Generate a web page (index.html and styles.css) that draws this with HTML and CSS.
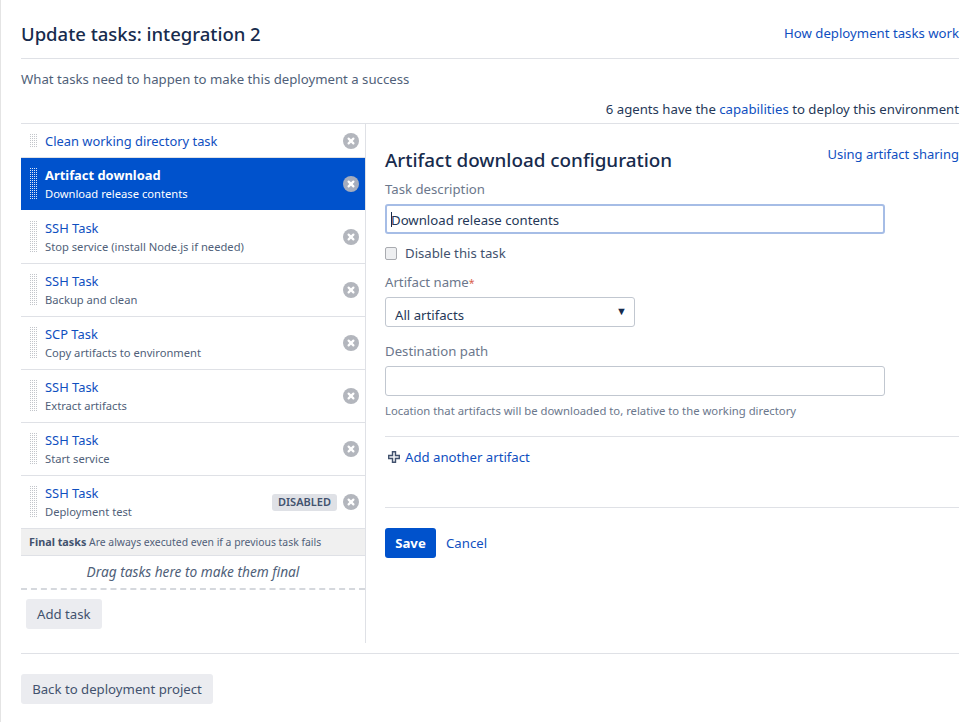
FILE: index.html
```html
<!DOCTYPE html>
<html lang="en">
<head>
    <meta charset="UTF-8">
    <title>Update tasks: integration 2</title>
    <link rel="stylesheet" href="styles.css">
</head>
<body>
    <svg class="sprites" width="0" height="0">
        <symbol id="remove" viewBox="0 0 16 16">
            <circle cx="8" cy="8" r="8" stroke="none"/>
            <path d="M5.6 5.6l4.8 4.8M10.4 5.6l-4.8 4.8"/>
        </symbol>
    </svg>

    <div class="page">
        <header class="page-head">
            <h1>Update tasks: integration 2</h1>
            <a href="#">How deployment tasks work</a>
        </header>
        <p class="page-desc">What tasks need to happen to make this deployment a success</p>
        <p class="agents">6 agents have the <a href="#">capabilities</a> to deploy this environment</p>

        <div class="columns">
            <aside class="tasks">
                <ul class="task-list">
                    <li class="task task-single">
                        <span class="handle"></span>
                        <div class="task-text"><a href="#">Clean working directory task</a></div>
                        <svg class="remove"><use href="#remove"/></svg>
                    </li>
                    <li class="task task-active">
                        <span class="handle"></span>
                        <div class="task-text"><a href="#">Artifact download</a><small>Download release contents</small></div>
                        <svg class="remove"><use href="#remove"/></svg>
                    </li>
                    <li class="task">
                        <span class="handle"></span>
                        <div class="task-text"><a href="#">SSH Task</a><small>Stop service (install Node.js if needed)</small></div>
                        <svg class="remove"><use href="#remove"/></svg>
                    </li>
                    <li class="task">
                        <span class="handle"></span>
                        <div class="task-text"><a href="#">SSH Task</a><small>Backup and clean</small></div>
                        <svg class="remove"><use href="#remove"/></svg>
                    </li>
                    <li class="task">
                        <span class="handle"></span>
                        <div class="task-text"><a href="#">SCP Task</a><small>Copy artifacts to environment</small></div>
                        <svg class="remove"><use href="#remove"/></svg>
                    </li>
                    <li class="task">
                        <span class="handle"></span>
                        <div class="task-text"><a href="#">SSH Task</a><small>Extract artifacts</small></div>
                        <svg class="remove"><use href="#remove"/></svg>
                    </li>
                    <li class="task">
                        <span class="handle"></span>
                        <div class="task-text"><a href="#">SSH Task</a><small>Start service</small></div>
                        <svg class="remove"><use href="#remove"/></svg>
                    </li>
                    <li class="task">
                        <span class="handle"></span>
                        <div class="task-text"><a href="#">SSH Task</a><small>Deployment test</small></div>
                        <span class="lozenge">DISABLED</span>
                        <svg class="remove"><use href="#remove"/></svg>
                    </li>
                </ul>
                <div class="final-head"><strong>Final tasks</strong> Are always executed even if a previous task fails</div>
                <div class="final-drop">Drag tasks here to make them final</div>
                <button class="btn btn-add" type="button">Add task</button>
            </aside>

            <main class="config">
                <div class="config-head">
                    <h2>Artifact download configuration</h2>
                    <a href="#">Using artifact sharing</a>
                </div>
                <label class="field-label">Task description</label>
                <div class="caret-wrap">
                    <input class="text-input text-focus" type="text" value="Download release contents">
                </div>
                <label class="check-row"><input type="checkbox"> Disable this task</label>
                <label class="field-label">Artifact name<span class="req">*</span></label>
                <div class="select-wrap">
                    <select class="select-input"><option>All artifacts</option></select>
                </div>
                <label class="field-label field-dest">Destination path</label>
                <input class="text-input" type="text">
                <p class="help">Location that artifacts will be downloaded to, relative to the working directory</p>
                <div class="add-row">
                    <svg class="plus" width="12" height="12" viewBox="0 0 12 12"><path d="M4.5 .7h3v3.8h3.8v3H7.500v3.800h-3V7.500H.7v-3h3.800z"/></svg>
                    <a href="#">Add another artifact</a>
                </div>
                <div class="actions">
                    <button class="btn btn-primary" type="button">Save</button>
                    <a href="#">Cancel</a>
                </div>
            </main>
        </div>

        <footer class="page-foot">
            <button class="btn btn-back" type="button">Back to deployment project</button>
        </footer>
    </div>
</body>
</html>
```

FILE: styles.css
```css
* {
    box-sizing: border-box;
}
html, body {
    margin: 0;
    background: #fff;
}
body {
    font-family: "Noto Sans", "Open Sans", sans-serif;
    font-size: 13.2px;
    line-height: 20px;
    color: #172b4d;
    height: 722px;
    overflow: hidden;
    border-left: 1px solid #e4e4e4;
}
a {
    color: #0f4fbf;
    text-decoration: none;
}
.sprites {
    position: absolute;
}
.page {
    width: 958px;
    padding-left: 20px;
}
.page-head {
    display: flex;
    justify-content: space-between;
    height: 59px;
    padding-top: 20px;
    border-bottom: 1px solid #dfe1e6;
}
.page-head a {
    margin-top: 3px;
}
h1 {
    margin: 0;
    font-size: 18.5px;
    line-height: 28px;
    font-weight: 500;
}
.page-desc {
    margin: 10px 0 0;
    color: #505f79;
}
.agents {
    margin: 10px 0 0;
    height: 25px;
    text-align: right;
    border-bottom: 1px solid #dfe1e6;
    color: #253858;
}
.columns {
    display: flex;
}
.tasks {
    width: 345px;
    height: 519px;
    flex: none;
    border-right: 1px solid #dfe1e6;
}
.task-list {
    list-style: none;
    margin: 0;
    padding: 0;
}
.task {
    display: flex;
    align-items: center;
    height: 53px;
    padding: 0 6px 0 8px;
    border-bottom: 1px solid #dfe1e6;
    width: 344px;
}
.task-single {
    height: 34px;
}
.task-single .task-text {
    padding-top: 1px;
}
.task-text {
    flex: 1;
    min-width: 0;
}
.task-text a {
    display: block;
    line-height: 19px;
    font-size: 12.9px;
}
.task-text small {
    display: block;
    font-size: 11.2px;
    line-height: 18px;
    color: #505f79;
}
.task-active {
    background: #0052cc;
    color: #fff;
    border-bottom: 1px solid #fff;
}
.task-active .task-text a {
    color: #fff;
    font-weight: 700;
}
.task-active .task-text small {
    color: #fff;
}
.handle {
    flex: none;
    align-self: stretch;
    width: 8px;
    margin: 10px 8px 10px 0;
    background: conic-gradient(#c2c5ca 25%, transparent 0) 0 0 / 2px 2px;
}
.task-active .handle {
    background: conic-gradient(#dfe6f6 25%, transparent 0) 0 0 / 2px 2px;
}
.task-single .handle {
    margin: 10px 8px 9px 0;
}
.remove {
    flex: none;
    width: 16px;
    height: 16px;
    margin-left: 6px;
    fill: #b3b6bd;
    stroke: #fff;
    stroke-width: 2.2;
    stroke-linecap: round;
}
.task-active .remove {
    fill: #a5adbe;
}
.lozenge {
    flex: none;
    height: 17px;
    line-height: 16px;
    padding: 0 6px;
    border-radius: 3px;
    background: #dfe1e6;
    color: #42526e;
    font-size: 11px;
    font-weight: 600;
}
.final-head {
    height: 27px;
    width: 344px;
    line-height: 26px;
    padding-left: 8px;
    background: #f0f0f0;
    border-bottom: 1px solid #dfe1e6;
    font-size: 10.4px;
    color: #505f79;
}
.final-head strong {
    font-size: 10.8px;
    color: #42526e;
}
.final-drop {
    height: 34px;
    width: 344px;
    line-height: 32px;
    text-align: center;
    font-style: italic;
    font-size: 13.7px;
    color: #505f79;
    border-bottom: 2px dashed #d5d8dd;
}
.btn {
    border: 0;
    border-radius: 3px;
    font: inherit;
    height: 30px;
    background: #ebecf0;
    color: #42526e;
    padding: 0 11px;
}
.btn-add {
    margin: 9px 0 0 5px;
}
.config {
    flex: 1;
    padding: 19px 0 0 19px;
}
.config-head {
    display: flex;
    justify-content: space-between;
    height: 36px;
}
.config-head a {
    line-height: 22px;
    font-size: 13px;
}
h2 {
    margin: 3px 0 0;
    font-size: 18.85px;
    line-height: 28px;
    font-weight: 500;
}
.field-label {
    display: block;
    color: #6b778c;
    line-height: 20px;
    height: 25px;
}
.field-dest {
    margin-top: 14px;
}
.req {
    color: #d9604c;
    font-size: 10.5px;
}
.text-input {
    display: block;
    width: 500px;
    height: 30px;
    padding: 0 9px;
    border: 1px solid #c1c7d0;
    border-radius: 3px;
    font: inherit;
    color: #253858;
    background: #fff;
    outline: 0;
}
.text-focus {
    border: 2px solid #a6bde6;
    padding: 2px 4px 0;
}
.caret-wrap {
    position: relative;
    width: 500px;
}
.caret-wrap::after {
    content: "";
    position: absolute;
    left: 6px;
    top: 8px;
    width: 1px;
    height: 15px;
    background: #172b4d;
}
.check-row {
    display: flex;
    align-items: center;
    gap: 8px;
    height: 20px;
    margin: 9px 0 9px;
    color: #42526e;
}
.check-row input {
    appearance: none;
    width: 12px;
    height: 13px;
    margin: 0;
    border: 1px solid #a9abb0;
    border-radius: 2px;
    background: #eeeff1;
}
.select-wrap {
    position: relative;
    width: 250px;
}
.select-wrap::after {
    content: "\25BC";
    position: absolute;
    right: 8px;
    top: 4px;
    font-size: 11px;
    color: #172b4d;
    pointer-events: none;
}
.select-input {
    display: block;
    width: 250px;
    height: 30px;
    padding: 5px 9px 0;
    border: 1px solid #c1c7d0;
    border-radius: 3px;
    font: inherit;
    color: #253858;
    background: #fff;
    appearance: none;
}
.help {
    margin: 5px 0 0;
    height: 36px;
    font-size: 11.3px;
    line-height: 20px;
    color: #6b778c;
    border-bottom: 1px solid #dfe1e6;
}
.add-row {
    display: flex;
    align-items: center;
    gap: 5px;
    height: 71px;
    padding: 0 0 30px 3px;
    border-bottom: 1px solid #dfe1e6;
}
.plus {
    flex: none;
    fill: #f4f5f7;
    stroke: #42526e;
    stroke-width: 1.4;
}
.actions {
    display: flex;
    align-items: center;
    gap: 10px;
    margin-top: 20px;
}
.btn-primary {
    background: #0052cc;
    color: #fff;
    font-weight: 700;
    width: 51px;
    padding: 0;
}
.page-foot {
    margin-top: 10px;
    padding-top: 20px;
    border-top: 1px solid #dfe1e6;
}
.btn-back {
    width: 192px;
    padding: 0;
}
```
